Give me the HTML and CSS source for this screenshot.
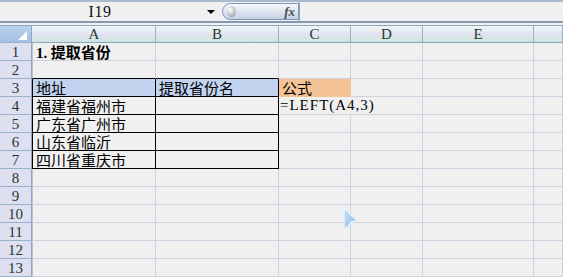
FILE: index.html
```html
<html>
<head>
<meta charset="UTF-8">
<title>提取省份</title>
<link rel="stylesheet" href="styles.css">
</head>
<body>
<div class="toolbar">
    <div class="namebox"><span class="name">I19</span></div>
    <div class="drop"></div>
    <div class="fxbtn"><span class="ball"></span><span class="fx">fx</span></div>
    <div class="formula"></div>
</div>
<div class="gap"></div>

<div class="sheet">
    <div class="row head">
        <div class="corner"><svg width="9" height="9" viewBox="0 0 9 9"><polygon points="9,0 9,9 0,9" fill="#fff"/></svg></div>
        <div class="ch a">A</div><div class="ch b">B</div><div class="ch cc">C</div><div class="ch d">D</div><div class="ch e">E</div><div class="ch f"></div>
    </div>
    <div class="row">
        <div class="rh">1</div>
        <div class="c a title"><span class="num">1.</span> 提取省份</div><div class="c b"></div><div class="c cc"></div><div class="c d"></div><div class="c e"></div><div class="c f"></div>
    </div>
    <div class="row">
        <div class="rh">2</div>
        <div class="c a top"></div><div class="c b top"></div><div class="c cc"></div><div class="c d"></div><div class="c e"></div><div class="c f"></div>
    </div>
    <div class="row">
        <div class="rh">3</div>
        <div class="c a box blue">地址</div><div class="c b box blue">提取省份名</div><div class="c cc orange">公式</div><div class="c d"></div><div class="c e"></div><div class="c f"></div>
    </div>
    <div class="row">
        <div class="rh">4</div>
        <div class="c a box">福建省福州市</div><div class="c b box"></div><div class="c cc spill"><span class="num formula-text">=LEFT(A4,3)</span></div><div class="c d"></div><div class="c e"></div><div class="c f"></div>
    </div>
    <div class="row">
        <div class="rh">5</div>
        <div class="c a box">广东省广州市</div><div class="c b box"></div><div class="c cc"></div><div class="c d"></div><div class="c e"></div><div class="c f"></div>
    </div>
    <div class="row">
        <div class="rh">6</div>
        <div class="c a box">山东省临沂</div><div class="c b box"></div><div class="c cc"></div><div class="c d"></div><div class="c e"></div><div class="c f"></div>
    </div>
    <div class="row">
        <div class="rh">7</div>
        <div class="c a box">四川省重庆市</div><div class="c b box"></div><div class="c cc"></div><div class="c d"></div><div class="c e"></div><div class="c f"></div>
    </div>
    <div class="row">
        <div class="rh">8</div>
        <div class="c a"></div><div class="c b"></div><div class="c cc"></div><div class="c d"></div><div class="c e"></div><div class="c f"></div>
    </div>
    <div class="row">
        <div class="rh">9</div>
        <div class="c a"></div><div class="c b"></div><div class="c cc"></div><div class="c d"></div><div class="c e"></div><div class="c f"></div>
    </div>
    <div class="row">
        <div class="rh">10</div>
        <div class="c a"></div><div class="c b"></div><div class="c cc"></div><div class="c d"></div><div class="c e"></div><div class="c f"></div>
    </div>
    <div class="row">
        <div class="rh">11</div>
        <div class="c a"></div><div class="c b"></div><div class="c cc"></div><div class="c d"></div><div class="c e"></div><div class="c f"></div>
    </div>
    <div class="row">
        <div class="rh">12</div>
        <div class="c a"></div><div class="c b"></div><div class="c cc"></div><div class="c d"></div><div class="c e"></div><div class="c f"></div>
    </div>
    <div class="row">
        <div class="rh">13</div>
        <div class="c a"></div><div class="c b"></div><div class="c cc"></div><div class="c d"></div><div class="c e"></div><div class="c f"></div>
    </div>
</div>

<!-- 鼠标指针 -->
<svg class="cursor" width="22" height="26" viewBox="0 0 22 26">
    <defs>
        <linearGradient id="cg" x1="0" y1="0" x2="1" y2="1">
            <stop offset="0" stop-color="#c6def6"/>
            <stop offset="1" stop-color="#8fbcec"/>
        </linearGradient>
    </defs>
    <polygon points="4,3 17,16 11,17 7,23 4,22" fill="#b5d4f4" stroke="#cfe4fa" stroke-width="3" stroke-linejoin="round" opacity="0.6"/>
    <polygon points="4,3 17,16 11,17 7,23 4,22" fill="url(#cg)" stroke="#fff" stroke-width="1" stroke-linejoin="round"/>
</svg>
</body>
</html>
```

FILE: styles.css
```css
body {
    margin: 0;
    width: 563px;
    height: 277px;
    overflow: hidden;
    background: #f0f0f0;
    font-family: "Noto Sans CJK SC", sans-serif;
    position: relative;
}
.toolbar {
    display: flex;
    height: 19px;
    border-top: 2px solid #a9bccf;
    border-bottom: 2px solid #8299b2;
    background: #f0f0f0;
}
.namebox {
    width: 200px;
    display: flex;
    justify-content: center;
    align-items: center;
}
.name {
    font-family: "Liberation Serif", serif;
    font-size: 16px;
    letter-spacing: 0.5px;
    color: #111;
}
.drop {
    width: 0;
    height: 0;
    margin: 8px 7px 0 7px;
    border-left: 4px solid transparent;
    border-right: 4px solid transparent;
    border-top: 4px solid #000;
}
.fxbtn {
    box-sizing: border-box;
    width: 77px;
    height: 17px;
    margin-top: 1px;
    border: 1px solid #7f96b6;
    border-radius: 9px 0 0 9px;
    background: linear-gradient(#f6f8fc, #dfe6f2 50%, #c4d0e4);
    display: flex;
    align-items: center;
    justify-content: space-between;
    padding: 0 3px 0 4px;
}
.ball {
    width: 9px;
    height: 11px;
    border-radius: 50%;
    background: radial-gradient(circle at 35% 35%, #ffffff, #b8bcc4 60%, #8c929c);
}
.fx {
    font-family: "Liberation Serif", serif;
    font-style: italic;
    font-weight: bold;
    font-size: 13px;
    color: #4a4a4a;
}
.formula {
    flex: 1;
    border-left: 1px solid #8ea4bc;
}
.gap {
    height: 2px;
}
.row {
    display: flex;
    height: 18px;
}
.rh, .corner {
    box-sizing: border-box;
    width: 32px;
    height: 18px;
    border-right: 1px solid #8fa8c0;
    border-bottom: 1px solid #9ab2c8;
    background: #dedff0;
    font-family: "Liberation Serif", serif;
    font-size: 15px;
    line-height: 18px;
    text-align: center;
    color: #1e3a2c;
}
.corner {
    background: linear-gradient(#bcd2ec, #a2bfe4);
    border-top: 1px solid #8ea6bd;
    display: flex;
    align-items: flex-end;
    justify-content: flex-end;
    padding: 0 4px 2px 0;
}
.corner svg {
    display: block;
}
.ch {
    box-sizing: border-box;
    height: 18px;
    border-top: 1px solid #8ea6bd;
    border-bottom: 1px solid #8ea6bd;
    border-right: 1px solid #9ab0c4;
    background: linear-gradient(#eef5f5 0%, #e9eef5 30%, #dfdff0 55%, #d6e8e6 80%, #cde0df 100%);
    font-family: "Liberation Serif", serif;
    font-size: 15px;
    line-height: 17px;
    text-align: center;
    color: #1e3a2c;
}
.c {
    box-sizing: border-box;
    height: 18px;
    border-right: 1px solid #d0d0e0;
    border-bottom: 1px solid #d0d0e0;
    font-size: 15px;
    line-height: 17px;
    padding-left: 3px;
    white-space: nowrap;
    color: #000;
}
.a {
    width: 124px;
    border-left: 1px solid #b4c6d6;
}
.ch.a {
    border-left: none;
    width: 124px;
    padding-left: 1px;
}
.b { width: 123px; }
.cc { width: 72px; }
.d { width: 72px; }
.e { width: 111px; }
.f { flex: 1; }
.title {
    font-weight: bold;
    padding-left: 3px;
}
.num {
    font-family: "Liberation Serif", serif;
    font-size: 15px;
}
.formula-text {
    letter-spacing: 1px;
}
.top {
    border-bottom-color: #000;
}
.box {
    border-right-color: #000;
    border-bottom-color: #000;
}
.a.box {
    border-left-color: #000;
}
.blue {
    background: #c2d3f0;
}
.orange {
    background: #f4c496;
    border-right-color: #f4c496;
    border-bottom-color: #f4c496;
}
.spill {
    border-right-color: #f0f0f0;
    padding-left: 1px;
}
.cursor {
    position: absolute;
    left: 340px;
    top: 205px;
}
```
